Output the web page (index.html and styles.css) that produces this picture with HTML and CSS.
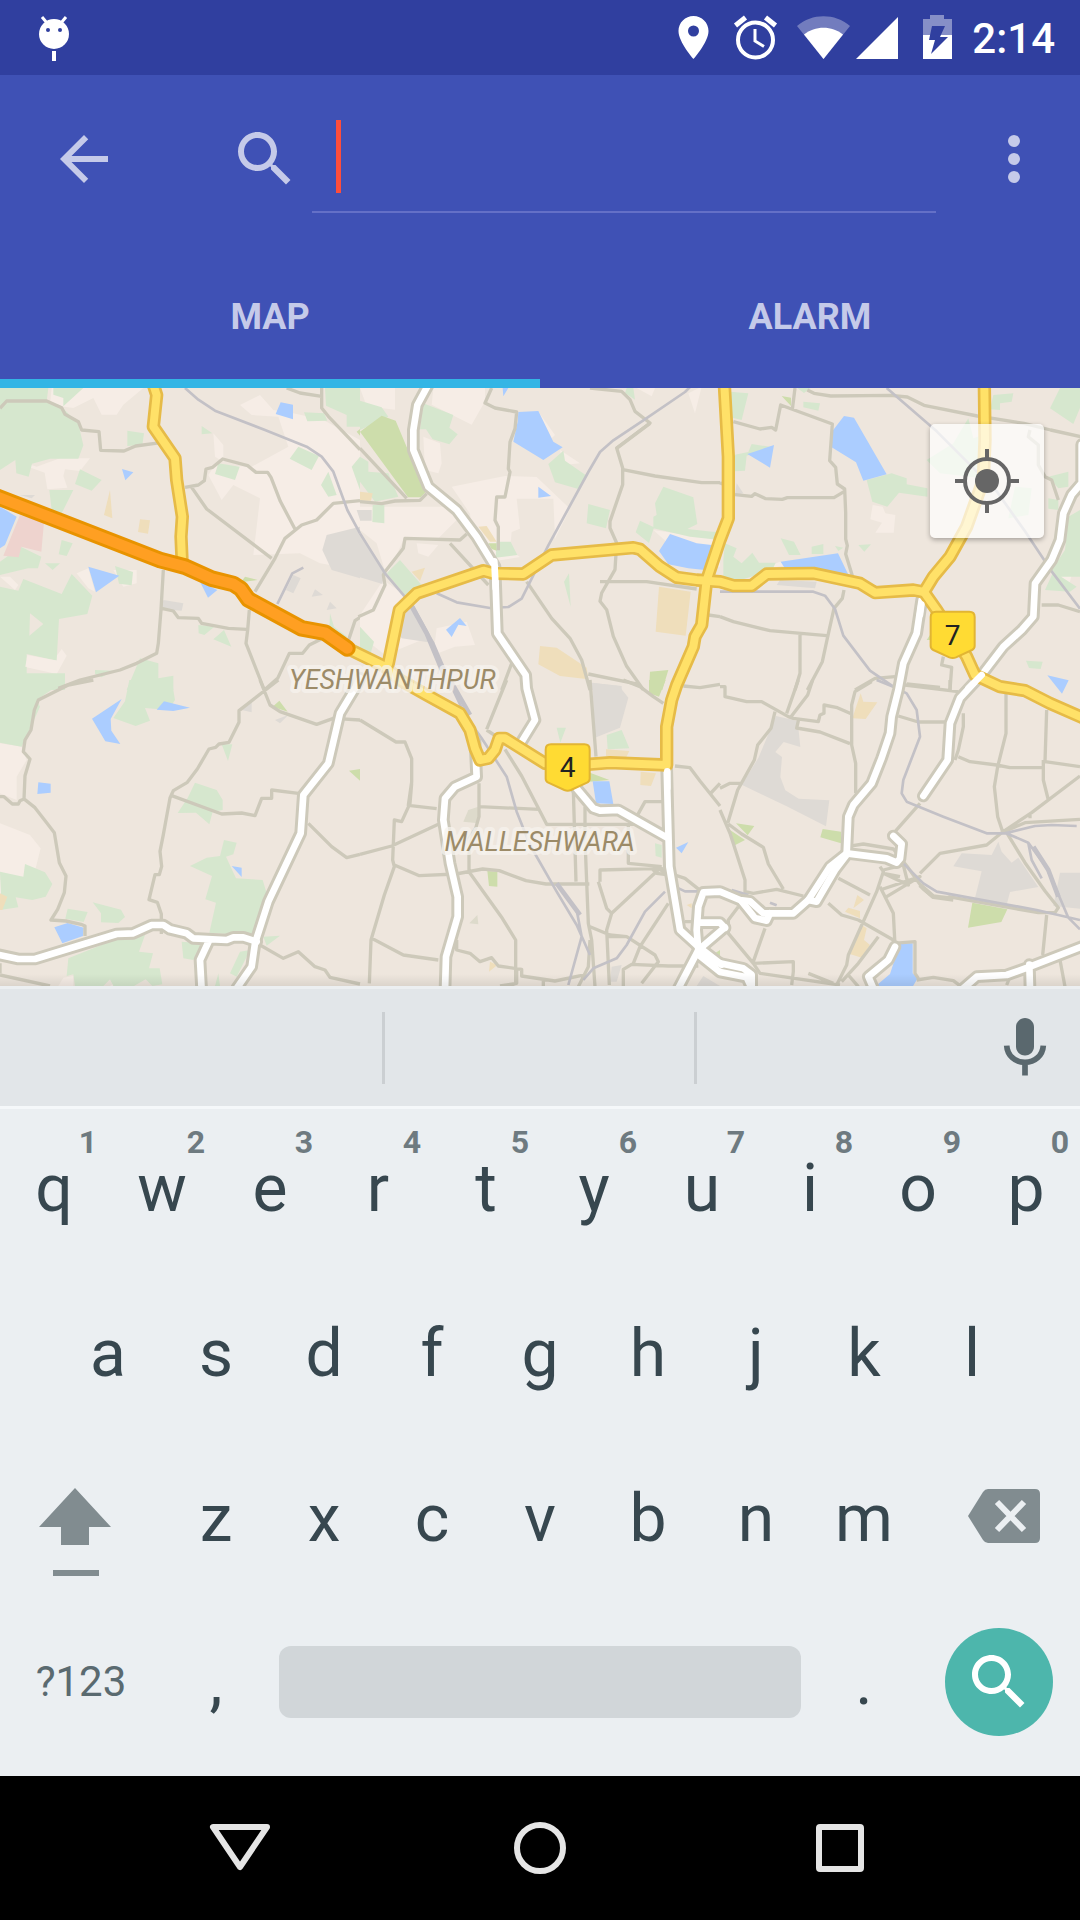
FILE: index.html
```html
<!DOCTYPE html>
<html lang="en">
<head>
<meta charset="utf-8">
<meta name="viewport" content="width=device-width, initial-scale=1">
<title>Map alarm</title>
<link rel="stylesheet" href="styles.css">
</head>
<body>
<svg class="sprite" aria-hidden="true">
  <symbol id="i-search" viewBox="0 0 24 24"><path d="M15.5 14h-.79l-.28-.27C15.41 12.59 16 11.11 16 9.5 16 5.91 13.09 3 9.5 3S3 5.91 3 9.5 5.91 16 9.5 16c1.61 0 3.09-.59 4.23-1.57l.27.28v.79l5 4.99L20.49 19l-4.99-5zm-6 0C7.01 14 5 11.99 5 9.5S7.01 5 9.5 5 14 7.01 14 9.5 11.99 14 9.5 14z"/></symbol>
</svg>

<div class="status">
  <svg class="debug-icon" viewBox="36 0 36 75" width="36" height="75" aria-label="USB debugging">
    <circle cx="54" cy="34" r="15"/>
    <path d="M42 17l5 6M66 17l-5 6" stroke="#fff" stroke-width="3"/>
    <circle cx="48" cy="30" r="2" fill="#303f9f"/><circle cx="60" cy="30" r="2" fill="#303f9f"/>
    <path d="M52 51h4v10h-4z"/>
  </svg>
  <div class="status-icons">
    <svg viewBox="664 0 60 75" width="60" height="75" aria-label="Location"><path fill-rule="evenodd" d="M693.500 16c-8.300 0-15 6.700-15 15 0 11.200 15 28 15 28s15-16.800 15-28c0-8.300-6.700-15-15-15zm0 9.500a5.500 5.500 0 1 1 0 11 5.500 5.500 0 0 1 0-11z"/></svg>
    <svg viewBox="724 0 64 75" width="64" height="75" aria-label="Alarm set"><circle cx="755.500" cy="40" r="17.500" fill="none" stroke="#fff" stroke-width="4"/><path d="M735.500 25.500l10-8M775.500 25.500l-10-8" stroke="#fff" stroke-width="5"/><path d="M755 29v12l9 5.500" fill="none" stroke="#fff" stroke-width="3"/></svg>
    <svg viewBox="788 0 66 75" width="66" height="75" aria-label="Wi-Fi"><path opacity=".32" d="M797 26c15-13 38-13 53 0l-26.500 33z"/><path d="M804 34.500c11-9 28-9 39 0L823.500 59z"/></svg>
    <svg viewBox="854 0 60 75" width="60" height="75" aria-label="Signal"><path d="M898 17v42h-42z"/></svg>
    <svg viewBox="914 0 54 75" width="54" height="75" aria-label="Battery charging"><path opacity=".42" d="M930 15h14v4h8v16h-29V19h7z"/><path d="M923 35h29v24h-29z"/><path fill="#303f9f" d="M932 26h13l-5 11h8l-17 17 4-14h-6z"/></svg>
  </div>
  <time class="clock">2:14</time>
</div>

<header class="appbar">
  <form class="toolbar" onsubmit="return false">
    <button class="icon-btn" type="button" aria-label="Back"><svg viewBox="0 0 24 24"><path d="M20 11H7.830l5.590-5.590L12 4l-8 8 8 8 1.410-1.410L7.830 13H20v-2z"/></svg></button>
    <label class="search-label" for="q" aria-label="Search"><svg viewBox="0 0 24 24"><use href="#i-search"/></svg></label>
    <div class="field"><input id="q" type="text" autocomplete="off"><span class="cursor"></span></div>
    <button class="icon-btn" type="button" aria-label="More options"><svg viewBox="0 0 24 24"><circle cx="12" cy="6" r="2"/><circle cx="12" cy="12" r="2"/><circle cx="12" cy="18" r="2"/></svg></button>
  </form>
  <nav class="tabs">
    <button class="tab active" type="button">MAP</button>
    <button class="tab" type="button">ALARM</button>
  </nav>
</header>

<main class="map">
<svg class="map-art" viewBox="0 0 3240 1794" role="img" aria-label="Street map">
  <defs>
    <g id="white-roads">
      <path d="M1285-10L1252 51 1240 126V186L1285 296 1370 366 1430 446 1485 536 1492 736 1577 861 1580 901 1605 996 1565 1061"/>
      <path d="M1080 870L1065 901 1020 976 985 1126 910 1221 902 1336 805 1541 765 1666 755 1736 710 1801"/>
      <path d="M-10 1699L55 1713H105L350 1638 400 1636 455 1611H490L510 1624 560 1636 580 1651 680 1656 700 1648H730L770 1661M628 1656L600 1716 605 1806"/>
      <path d="M1425 1060L1430 1166 1365 1196 1335 1231 1330 1296 1350 1426 1373 1526V1586L1338 1706 1335 1806"/>
      <path d="M1720 1190L1780 1261 1800 1268 1855 1266 2005 1351M2000 1140L2008 1436 2040 1626 2095 1676 2165 1730"/>
      <path d="M2035 1801L2095 1686 2090 1626 2095 1556 2110 1513 2160 1511 2220 1536 2250 1540 2290 1576H2380L2425 1536 2490 1436 2540 1396 2660 1411 2690 1424 2700 1412 2705 1368 2680 1344"/>
      <path d="M2095 1686L2175 1618M2100 1604L2160 1604 2175 1620M2225 1540L2265 1590 2300 1598 2310 1576M2540 1400L2505 1446 2450 1541 2425 1536M2095 1700L2160 1726 2230 1741 2255 1760 2255 1801M2095 1700L2160 1752 2240 1768 2250 1790"/>
      <path d="M2765 636L2750 736 2710 826 2695 906 2675 986 2670 1036 2645 1110 2615 1186 2560 1251 2545 1286 2540 1396"/>
      <path d="M2770 1224L2843 1116 2850 1006 2880 930 2925 881 2945 861 3010 776 3065 726 3100 686 3105 586 3155 516 3180 456 3190 376 3215 320 3245 285 3245 170"/>
      <path d="M2685 1676L2665 1716 2605 1766 2620 1801M3250 1674L3090 1736 3020 1761 2930 1766 2890 1801M3088 1730L3090 1801"/>
    </g>
    <g id="yellow-roads">
      <path d="M460-10L470 21 460 116 525 211 530 276 547 386 543 446 546 515"/>
      <path d="M1042 781L1155 836 1200 876 1280 921 1380 976 1410 1026 1425 1081 1440 1116 1465 1111 1485 1086 1497 1051 1515 1051 1635 1126 1700 1134 1830 1124 2000 1131V1016L2015 936 2030 891 2080 776 2085 746 2105 711 2120 576 2140 516 2160 456 2185 391V206L2173-10"/>
      <path d="M1165 826L1198 666 1250 616 1450 548 1480 556 1570 558 1655 501 1900 479 1920 484 1980 536 2030 568 2090 576 2160 581 2200 593H2255L2300 558 2440 556 2580 586 2625 614 2740 606 2772 612"/>
      <path d="M2953-10L2955 156 2950 276 2900 416 2850 506 2800 566 2772 612 2810 666 2900 806 2925 861 3000 896 3075 908 3150 946 3250 990"/>
    </g>
    <path id="highway" d="M-20 322L150 388 480 516 555 536 635 572 700 588 722 602 745 634 905 721 975 734 1042 781"/>
  </defs>
  <rect width="3240" height="1794" fill="#eee6dd"/>

  <!-- north-west -->
  <g transform="translate(0 -24)">
    <path class="pale" d="M155 24h275l-60 50-20 30-45 0-25-50-60 30-70-10zM50 240l60 20 70-25h90l-30 38-45-5-5 20 12 35-60 5-8-50-50-18zM720 75l60-30 40 45 60 10 90 20 110 60v360l-60 20-60-10-60-30-140 5 20-170-80-40-35 45-40-75 20-30 110 5 110-60-30-90-80-5zM640 160l30 35v50l-25-15zM80 830l80 12 25-35 15 20-30 55-90-20zM230 580l35-15 20 70-20-10zM340 570l70 0v40l-40 10zM0 590l30 0 25 25-10 15z"/>
    <path class="green" d="M0 24h145l-5 40 40 12 55 55 15 65-15 40-85 0-54 15-10 39-37-10-3-40-46 30zM160 24h90l-60 55 0-25-30-10zM382 152l50 8-5 35-45 3zM240 268l65 32-30 32-50-20zM148 330h72l-35 70-30-10zM605 138l32 22-32 3zM895 200l62 28-22 42-66-34zM655 250l64 10-14 40-60-18zM975 24h105v116h-40l0-35-62-28zM912 97l60 3 10 22-60 2zM985 275l25 70-25 5-22-35zM1055 260l25-30v100zM185 480l33 10-18 38-24-5zM62 500l62 30-10 35-30 0-84 20v-40zM345 558l54 18-4 40-38-5zM135 550l45 0-22 20zM0 620l55 12 15-35 115 45 30-60 62 65-15 55-85 15-7 125-90-20v58h115v50H0zM595 735l48 5-30 25-17-5zM672 750l22 50-54-22zM420 835l55 15 0 45 45-8v43H380zM285 870l55 2-35 20-20-10zM990 700l12 40 40 30-40 10-15-10z"/>
    <path class="base" d="M90 700l40 32-42 35z"/>
    <path class="pale" d="M82 825l92 17-4 30-94-12z"/>
    <path class="sand" d="M330 330l7 85-25-10zM420 418l30 3-6 40-30-5z"/>
    <path class="pink" d="M60 405l72 22-8 88-60-15-8 32-46-5z"/>
    <path class="lime" d="M735 590l38 10-50 7zM1070 155l10-8v20z"/>
    <path class="grey" d="M980 465l100-25v155l-85-25-28-60zM880 585l22 10-22 45-22-10zM945 628l24 17-34 5zM990 665l20 20-30 5zM490 660l60 10-5 22-60-5zM1070 390h10v30zM60 345h45l-10 10z"/>
    <path class="water" d="M842 67l37 7v44l-52-16zM366 267l34 10-24 24zM265 560l93 27-70 50zM600 605l52 25-28 23zM0 380l50 30-35 85-15 10z"/>
    <path class="road" d="M0 85l20-22 120 0 45 20 10 20 40 22 10 25 52 5 5 56 70 2 35-15 75-10M555 322l40-7 18-13 5-35 20-5 30-25 75 20 25 20 35 0 10 15 28 72 45 85M575 322l45 65 195 148M1080 362l-80 8-50 50-45 15-50 40-30 60-60 100M860 24l40 15 65 10M965 24v60l20 25 95 100M490 570l-7 120-8 100-5 30-60 30-50 20-60 15-60 15-65 25M485 685l35 8 15 20 60 2 10 15 80 15 55 3M748 690l-5 60-5 40 55 140 40-35 35-75 40 0 20-25 30-15 60-15M1080 712l-15 10-20 60"/>
    <path class="rail" d="M555 24l40 35 50 33 150 58 125 50 45 30 35 45 22 60 20 55 38 70M832 672l45-92 33-17"/>
  </g>
  <!-- north -->
  <g transform="translate(1080 -24)">
    <path class="pale" d="M0 24h105v65l-85-10zM220 24h155l0 40-40 70-120-60zM190 170l50 20 5 60-10 30-40-10zM275 320l100-20 60-12 95 3 100 95-45 90-5-120h-110l10 90-25 10-5 55 30 20-60 10-80-60-10-80zM0 380h260l30 40-60 60-100 0-50 110-30-100-50-40zM170 490l65 5-30 35-30-10zM600 210l60 40-50 5zM880 450l200 30v80l-100-20zM70 600l85 60 30 120-110 45-75-60v-60zM230 745l90-20 25 70-60 5-65 25zM535 95l50 70-10 10zM985 40l40-20-20 80zM830 24l55 0-10 25z"/>
    <path class="green" d="M0 62l65 20 20 28-85 40zM190 70l90 35-12 38 25 20-25 30-50-15-20-30-18 0zM0 230l25 15 0 30 60 5 30 70-70 15-45-60zM38 375l35 0v55l-36-4zM610 212l5 30 65 45-25 40-70-20-20-55zM685 372l65 18-12 55-58-15zM910 320l90 32 12 80-30 15 75 8 23 0v25l-90-10-110-25v-35l10-5-5-35zM840 422l42 20-15 47-40-32zM410 485h42l20 40-65 8zM120 540l65 75-50 30-55-65zM0 740l42 45-10 35-32-15zM627 580l5 100-20-75zM800 24h20l5 35-30-20z"/>
    <path class="lime" d="M65 107l42 15 90 215-15 15h-38L0 155zM870 875l55-5-18 60h-40zM385 490l25 0 0 22-15-5z"/>
    <path class="sand" d="M355 440l25-2 30 47-20 0zM155 575l40-12-15 40zM540 798l50 5 90 60 5 35-85-10-65-35zM897 620l95 15-15 132-90-12zM0 335l38 5-5 22-33 0z"/>
    <path class="grey" d="M0 460l75 110-8 42-67-20zM150 680l75 110-100-15-30-40 20-40zM0 390h35v32H0zM690 908l95 10v12h-95z"/>
    <path class="water" d="M475 96l60-3 45 92 28 17-58 38-90-55 13-60zM428 24h17l-15 25zM535 320l38 28-38 5zM930 462l80 28 45 5-20 75-50-5-60-12-28-40zM300 714l20 24-25-4-20 37-17-22z"/>
    <path class="road" d="M0 205l140 150M0 365l65 6 40-8 75-2 20-20M395 24l-20 45 30 15 65 12-5 50-15 40-5 80 5 10-15 75-25 0-5 70 10 20 0 70M320 462l-20 18-165-5-5 30-55 70-5 10 5 30-35 75-45 20M270 490l115 125M690 24l95 10 25 25 15 35 45 35-100 75 18 60 0 50-38 110 0 20 20 45-5 80-40 70-5 25 20 25 20 80 40 90 50 70M785 268l100 20 140 20 55 0M720 605h140l150 22M500 605l75 110 55 60 35 65 25 90M685 882l155 32M1045 705l35 5M970 918l50 5 60-10M455 850l-30 80"/>
    <path class="rail" d="M0 460l75 120 85 100 60 110 60 140M230 640l60 27 100 17 55-3 40-25 30-60 50-100 120-220 35-60 40-35 90-60 125-85 30-30 30-45"/>
    <path class="rail thick" d="M150 670l50 90 50 120 25 50"/>
    <path class="road" d="M770 205l100-75"/>
  </g>
  <!-- north-east -->
  <g transform="translate(2160 -24)">
    <path class="pale" d="M458 375l30 5 8 20 30 5-5 53-55 0 20-30-35-10zM1000 600l30-60 30 25-10 40-40 10zM140 560l40-15 20 10-50 10z"/>
    <path class="green" d="M30 35l55 5-20 80-35-8zM95 192l65 10-80 25-5 45-30 2v-50l40-8zM440 300l75-20 45 15 0 18 62 12v25l-85-12-35 42-45-15zM250 65l50 5-5 22-45-10zM232 24h40l-20 15zM820 45l60-5-5 25-35 5 0 20-30-2zM1020 24h60v60l-20 48-70-47zM15 490l35 15-10 25 25 20 32-32 20 30 50 0-10 22-95 30H10v-60zM182 475l40 10 20 40-35 0zM275 500l35-8 0 30-35 0zM415 495l38-2-20 22zM345 498l25 5-15 10zM985 290l60-15v45l-30 5zM985 355l30 5 0 30-30-4zM1045 410l35-20v200l-60 0-25-20 40-60zM975 630l25-55 70 45-20 15zM745 115l15 60 30-10v130l-130-15-40-40 80-50zM885 320l50 5-10 80-60 10zM918 842l50 3-6 22-35-3z"/>
    <path class="lime" d="M185 48l28 5 0 25zM620 780l20-30v30z"/>
    <path class="grey" d="M180 600l110 5-5 20-115-10zM50 310l20 30-25 5z"/>
    <path class="water" d="M372 108l30 5 98 170-70 19-22-55-73-45 3-50zM82 222l80-27-12 68zM182 545l172-25 30 62-160-15-30-3zM982 886l64 15-20 40z"/>
    <path class="road" d="M225 24l-8 65M40 125l80 22 35-5 12 8 15-75 155 57-8 110 18 20 5 50 22 15 3 70 0 80 5 20-5 25 20 65M372 335l-30 18-140 0-15 5-50-2-32-15-10 8-50-5M0 308l10 5M262 30l20 10 50 8 180-2 50 5 50 25 160 32 140 22 80 20 90 20M372 630l-5 25-25 30-20 90-15 70-45 85M0 710l40 15 110 27 170 15M240 760l0 120-15 50M965 675l50 0 65 20M670 830l-5 25 30 7-5 68M405 930l60-35 60-5M930 150l-5 20 30 25 0 60 20 35 20 10 20 60M560 912l100 10"/>
    <path class="rail" d="M500 24l150 130 180 180 85 120 80 120 85 112M0 635h280l35 12 30 40 25 80 80 105 70 48"/>
  </g>

  <!-- south-west -->
  <g transform="translate(0 876)">
    <path class="pale" d="M0 190l65 10 15 40-30 50v70l-50-20zM0 430l90 35 32 40-15 60-40 30-67-15zM0 600h35l-15 45-20 0zM175 918l15-25 30-5v30zM330 918l25-20 40 20z"/>
    <path class="green" d="M0 0h190v5l-80 55 10 20-25 55-30 65-65-12zM388 0h127l10 60-20 30-70-6 15 38-43 16-67-24 35-50zM0 575l70 15 5-38 60 25 22 35-20 38-40 10-50-8 8 30-50 7zM203 686l60 10-12 30-55-10zM278 667l85 22 12 22-20 18-52-2 0-27zM585 308l65 22 18 30v30l-30 5-10 38-40-35-55 1 30-45zM672 480l38 8-10 35-22 7 30 65 80 5 12 40-25 90-12 38-135-10 20-90-32-10 20-70-66-30 50-25 40-5zM665 193l32 0-13 50zM205 835l150-60 80-10-18 50 42 5-12 45 32 0 8 48-30 5-20-20-35 20H340l-10-20-20 20h-85l-5-35-20 5zM545 785l60 5-25 50-30-5zM720 815l30-5-40 80-20-10zM790 770l50-3-40 30zM655 880l5 38h-15z"/>
    <path class="lime" d="M838 62l25 33-45-15zM1047 272l33-5v35z"/>
    <path class="sand" d="M0 640l22 10-15 40-7 0z"/>
    <path class="grey" d="M725 90l30-25 0 32zM825 120l40-15-25 25z"/>
    <path class="water" d="M365 57l-33 60 2 35 27 40-45-8-40-68zM492 64l78 19-50 10-50-4zM115 307l37 4v27l-40 4zM163 742l40-13 48 14-2 25-62 22zM695 558l30 5 0 28z"/>
    <path class="road" d="M280 0l-75 15-90 45-12 30-10 60-18 30-5 35 20 22-15 50-3 70-12 5-5 10-18 0-25-22H0M70 355l35 28 35 45 23 30 15 90 20 40-5 50-20 50-20 32 45 3 45 10 12 5v30M780 0l30 75 30 20 110 38 50-18 80 5M835 0l-118 92 0 35-30 60-30 5-10 10-20 5-35 60-30 40-42 25-10 22-20 110-10 50 5 45-7 25-13 0-18 75 25 8 12 35 0 60M515 347l150 55 60-3 40 8 20-52 30 0 0-25 80 10M925 430l70 70 45 33 40-10M780 795l70 40 45-20 50 45 30 10 15 22 90 20M0 885l150 33M0 850v30"/>
  </g>
  <!-- south -->
  <g transform="translate(1080 876)">
    <path class="green" d="M590 143h28l-17 45zM740 165l45-15 23 55-65 3zM885 490l20 5v38l-18-5z"/>
    <path class="lime" d="M867 0h50l-20 50-30-10zM690 278l58 22-60 5zM382 573l30 2v45l-25-2zM1065 820l15-10v30z"/>
    <path class="sand" d="M738 208l70 5-10 20-60-5zM842 275l46 5-15 38-32-3zM390 845l22 10-25 20zM980 675l15-5v15z"/>
    <path class="grey" d="M697 8l80 10 28 35-25 90-75 30zM755 860l30-5-15 50-20 0zM1030 888l50 30h-70z"/>
    <path fill="#dddacb" d="M325 390l30-10v50l-45-5zM352 705l3 28-27-3z"/>
    <path class="water" d="M698 304l50 0 12 68-52-2zM985 486l-20 34-17-17z"/>
    <path class="road" d="M0 120l108 66 27 0 20 50 0 70-10 70 85 10M155 310l-5 60-25 55-22-5-5 120 5 20-30 85-40 135-5 130M0 523l95-25 140-65M103 555l75 32 110-5 80-15 50 5 80 30 60 10h130M357 310v100l-10 35-20 30 0 100 100 140 40 65 0 130-50 20M357 380l180 8M380 150l90 60M440 0l-60 148M435 208l50 80 75 145h270M640 330l8 275M675 380l0 100 10 250 10 50 10 140M690 0l18 230M805 430l0 120 100 10M790 0l50 20 40 30 30 20M830 410l25-45h55M720 605v-35l185-5 10 15M715 605l25 80 15 15-15 50 8 165M755 700l150-140M690 740l60 25 50 5 85 55 10 20-50 65M35 775l95 50 105 15M290 780v30l40 10 30 25 35-12 20 25 70 10 0 20 100 15 95-20M470 865v45l-50 8M550 895v30M740 770l55 0M790 918l0-50 25-15 110 5 90 0M820 850l20-50 85-130M900 570l75 25 50 40M945 258l45 5 30 40 60 75M1080 310l-30 32M870 560l20 20 40 5M975 725h40M690 780l-5 80-30 60"/>
    <path class="rail" d="M275 20l40 85 50 70 75 115 30 105 40 100 80 140 60 100 40 90M650 690l15 80-40 145M670 900l30-35 70-30 30-40 55-100 60-60M945 620l30 14 60 0"/>
    <path class="rail thick" d="M270 0l60 105M590 610l70 95"/>
  </g>
  <!-- south-east -->
  <g transform="translate(2160 876)">
    <path class="lime" d="M48 430l55 8-20 28zM30 450l45 30-35 18zM308 447l55 8v35l-62-18zM757 668l105 20-18 38-100 17z"/>
    <path class="sand" d="M422 40l8 25 42 2-35 50-40-2zM412 645l20 15-32 25zM385 683l35 10v22l-45-20zM425 735l15 10-8 35 18 15-25 38-38-12z"/>
    <path class="grey" d="M168 108l65 15 8 78-50-15-25 30 20 15-5 60 15 40 40 25 92 5-10 78-118-60-135-65 50-80zM725 520l90 5 20-40 10 30 30 33 20-15 60 88-85 15-10 38-95-20 20-80-85-15zM1020 578h60v108l-80-8z"/>
    <path class="water" d="M540 790h38l0 90 15 15-15 25H465l45-38z"/>
    <path class="road" d="M0 20l15 0v30l65 15h45l80 45 15 5 75 10 5-20 12-5 0-25 40 8 45 20M235 0l-35 100M278 0l-15 45-50 65M235 122l-5 22 70 12 90 35M165 95l-12 50-40 50-10 45-50 90-30 100M0 325l30-15 35 0M0 390l30 70 45 140v35l25 5 70-12 80 20M25 432l40 30 65 40 15 50 45 75M455 5l-50 30-10 40 0 120 12 55 0 90M600 370l-75 85M555 15l160 20 0 0M690 0v30M730 100l0 40-15 70-10 30M715 230l35 15 80 10 40 8h95M858 40l0 120-25 100-10 60 10 90 15 45M980 90l-5 155 105 15M970 240l0 60 15 60M535 108l60 18 80 0M845 458l90-60 145-110M930 400v15M845 458l70-30 165-10M600 580l60-60 140-25 45-37M380 500l50-8 90 15 40 50 50 70 30 25 60 0M860 458l55 90 60 85 40 50-10 15-50 0-270-48M355 595l95 50M480 630l120-40-100 60M480 560l10 15-20 60-85 190-5 30-30 60M490 570l60-15 15 60-75-35 50 10M480 620l40 80 5 95M325 670l40 35 50 15 105 60 0 10 65-5v95l10 15M590 900l50-8 60 10 20 15M475 770l-60 80-50 55M55 680l-30 40 0 40 75 90 120-5 0 30-5 40M100 845l35-100M100 850l20 30 240 35M265 880l75 30M980 705l-12 120M1020 840l15 80M385 885l30 35M870 890l-10 25"/>
    <path class="rail" d="M470 0l50 20 40 20 30 50 10 80-50 130-5 40 15 25 110 45 130 50 55 0 90-22 50-3 75 3M550 550l60 60 40 25 300 55 130 30M855 458l70 30 55 75 35 80 30 70 35 35M925 490l10 50 30 55M35 630l50 15M150 668l20 8"/>
    <path class="rail thick" d="M940 500l45 70 30 80"/>
    <path class="road thick" d="M600 615l40 35 60 8"/>
  </g>

  <!-- main roads: casing, then fill -->
  <g class="lines">
    <use href="#white-roads" class="case-white"/>
    <use href="#white-roads" class="fill-white"/>
    <use href="#yellow-roads" class="case-yellow"/>
    <use href="#yellow-roads" class="fill-yellow"/>
    <path class="fill-white" d="M1483 520L1487 600M2945 861L2905 901M2764 650L2760 680M2002 1150V1200"/>
    <use href="#highway" class="case-orange"/>
    <use href="#highway" class="fill-orange"/>
  </g>

  <g class="shield"><path d="M2808 671H2908Q2924 671 2924 687V774Q2924 782 2916 786L2868 808Q2858 812 2848 808L2800 786Q2792 782 2792 774V687Q2792 671 2808 671Z"/><text x="2858" y="770">7</text></g>
  <g class="shield"><path d="M1653 1069H1753Q1769 1069 1769 1085V1172Q1769 1180 1761 1184L1713 1206Q1703 1210 1693 1206L1645 1184Q1637 1180 1637 1172V1085Q1637 1069 1653 1069Z"/><text x="1703" y="1168">4</text></g>
  <text class="place" x="1177" y="902">YESHWANTHPUR</text>
  <text class="place" x="1619" y="1390">MALLESHWARA</text>
</svg>
<button class="locate" type="button" aria-label="My location"><svg viewBox="-36 -36 72 72"><circle r="22" fill="none" stroke="#666" stroke-width="4"/><circle r="12"/><path d="M-32 0h10M22 0h10M0-32v10M0 22v10" stroke="#666" stroke-width="4"/></svg></button>
</main>

<section class="keyboard" aria-label="Keyboard">
  <div class="suggestions">
    <div class="slots"><span></span><span></span><span></span></div>
    <button class="mic" type="button" aria-label="Voice input"><svg viewBox="0 0 24 24"><path d="M12 14.500c1.900 0 3-1.500 3-3V5c0-1.660-1.340-3-3-3S9 3.340 9 5v6.500c0 1.500 1.100 3 3 3z"/><path d="M5.900 11.200c.2 3.300 2.800 5.600 6.100 5.600s5.900-2.300 6.100-5.600M12 17v4.200" fill="none" stroke="#5a686e" stroke-width="1.900"/></svg></button>
  </div>
  <div class="row">
    <button class="key" type="button">q<sup>1</sup></button><button class="key" type="button">w<sup>2</sup></button><button class="key" type="button">e<sup>3</sup></button><button class="key" type="button">r<sup>4</sup></button><button class="key" type="button">t<sup>5</sup></button><button class="key" type="button">y<sup>6</sup></button><button class="key" type="button">u<sup>7</sup></button><button class="key" type="button">i<sup>8</sup></button><button class="key" type="button">o<sup>9</sup></button><button class="key" type="button">p<sup>0</sup></button>
  </div>
  <div class="row inset">
    <button class="key" type="button">a</button><button class="key" type="button">s</button><button class="key" type="button">d</button><button class="key" type="button">f</button><button class="key" type="button">g</button><button class="key" type="button">h</button><button class="key" type="button">j</button><button class="key" type="button">k</button><button class="key" type="button">l</button>
  </div>
  <div class="row">
    <button class="key broad shift" type="button" aria-label="Shift"><svg viewBox="0 -5 150 165" width="150" height="165"><path d="M75 47l36 39H89v18H61V86H39zM53 129h46v6H53z"/></svg></button>
    <button class="key" type="button">z</button><button class="key" type="button">x</button><button class="key" type="button">c</button><button class="key" type="button">v</button><button class="key" type="button">b</button><button class="key" type="button">n</button><button class="key" type="button">m</button>
    <button class="key broad erase" type="button" aria-label="Delete"><svg viewBox="0 -5 152 165" width="152" height="165"><path d="M60 48h47q5 0 5 5v44q0 5-5 5H60q-3 0-5-3L40 75l15-24q2-3 5-3z"/><path d="M69 61l27 28M96 61L69 89" stroke="#ebeff2" stroke-width="6"/></svg></button>
  </div>
  <div class="row last">
    <button class="key broad symbols" type="button">?123</button>
    <button class="key" type="button">,</button>
    <button class="key space" type="button" aria-label="Space"><span></span></button>
    <button class="key" type="button">.</button>
    <button class="key broad go" type="button" aria-label="Search"><span><svg viewBox="0 0 24 24"><use href="#i-search"/></svg></span></button>
  </div>
</section>

<nav class="navbar">
  <button type="button" aria-label="Back"><svg viewBox="-36 -36 72 72"><path d="M-27-21h54L0 19z" stroke-linejoin="round"/></svg></button>
  <button type="button" aria-label="Home"><svg viewBox="-36 -36 72 72"><circle r="23"/></svg></button>
  <button type="button" aria-label="Recent apps"><svg viewBox="-36 -36 72 72"><rect x="-21" y="-21" width="42" height="42" rx="1"/></svg></button>
</nav>
</body>
</html>
```
FILE: styles.css
```css
* { box-sizing: border-box; }
body {
  margin: 0;
  min-height: 100vh;
  display: flex;
  flex-direction: column;
  background: #000;
  font-family: Roboto, "Liberation Sans", sans-serif;
}
button {
  margin: 0;
  padding: 0;
  border: 0;
  background: none;
  color: inherit;
  font: inherit;
}
svg { display: block; }
.sprite { position: absolute; width: 0; height: 0; }

/* status bar */
.status {
  display: flex;
  align-items: center;
  height: 75px;
  padding: 0 25px 0 36px;
  background: #303f9f;
  color: #fff;
  fill: #fff;
}
.status-icons { display: flex; margin-left: auto; }
.clock { padding: 3px 0 0 4px; font-size: 42px; line-height: 48px; font-weight: 500; }

/* app bar */
.appbar { background: #3f51b5; color: #c5cae9; fill: #c5cae9; }
.toolbar {
  display: flex;
  align-items: center;
  height: 168px;
  padding: 0 30px 0 48px;
}
.icon-btn svg, .search-label svg { width: 72px; height: 72px; }
.search-label { margin: 0 11px 0 109px; }
.field { position: relative; flex: 1; margin-right: 42px; }
.field input {
  display: block;
  width: 100%;
  height: 108px;
  padding: 0 24px;
  border: 0;
  border-bottom: 2px solid #6470c7;
  outline: 0;
  background: none;
  color: #fff;
  font: 54px/72px Roboto, sans-serif;
}
.cursor {
  position: absolute;
  left: 24px;
  top: 15px;
  width: 5px;
  height: 73px;
  background: #fe4d3b;
}
.tabs { display: flex; height: 145px; }
.tab {
  flex: 1;
  padding-top: 12px;
  border-bottom: 9px solid transparent;
  font-size: 36px;
  font-weight: 700;
}
.tab.active { border-color: #33b5e5; }

/* map */
.map { position: relative; background: #eee6dd; }
.map::after {
  content: "";
  position: absolute;
  inset: auto 0 0;
  height: 12px;
  background: linear-gradient(transparent, rgba(0, 0, 0, .08));
}
.map-art { width: 100%; height: auto; }
.base { fill: #eee6dd; }
.pale { fill: #f6ede6; }
.green { fill: #d6e7ce; }
.lime { fill: #cdddab; }
.grey { fill: #dedad5; }
.sand { fill: #efdebb; }
.pink { fill: #eed3ce; }
.water { fill: #abcdff; }
.road, .rail { fill: none; stroke-linejoin: round; stroke-width: 10; }
.road { stroke: #cdc9ba; }
.rail { stroke: #c3c1c6; stroke-width: 8; }
.thick { stroke-width: 14; }
.lines { fill: none; stroke-linejoin: round; stroke-linecap: round; }
.case-white { stroke: #cdc9ba; stroke-width: 38; }
.case-yellow { stroke: #e6bb47; stroke-width: 40; }
.case-orange { stroke: #e89300; stroke-width: 50; }
.fill-white { stroke: #fff; stroke-width: 20; }
.fill-yellow { stroke: #ffe168; stroke-width: 24; }
.fill-orange { stroke: #ff9f22; stroke-width: 32; }
.shield path { fill: #ffdb33; stroke: #e2b533; stroke-width: 6; }
.shield text { fill: #222; font-size: 84px; text-anchor: middle; }
.place {
  fill: #9c8b68;
  stroke: rgba(246, 243, 238, .75);
  stroke-width: 24px;
  stroke-linejoin: round;
  paint-order: stroke;
  font-size: 81px;
  font-style: italic;
  text-anchor: middle;
}
.locate {
  position: absolute;
  top: 36px;
  right: 36px;
  display: grid;
  place-items: center;
  width: 114px;
  height: 114px;
  border-radius: 5px;
  background: rgba(255, 255, 255, .7);
  box-shadow: 0 2px 5px rgba(0, 0, 0, .3);
  fill: #666;
}
.locate svg { width: 72px; height: 72px; }

/* keyboard */
.keyboard {
  flex: 1;
  padding-bottom: 13px;
  background: #ebeff2;
  color: #37474f;
}
.suggestions {
  display: flex;
  align-items: center;
  height: 123px;
  margin-bottom: -3px;
  border-top: 3px solid #eceff1;
  border-bottom: 3px solid #f5f8fa;
  background: #e2e6e9;
}
.slots { flex: 1; display: flex; height: 72px; padding-left: 72px; }
.slots span { flex: 1; }
.slots span + span { border-left: 3px solid #cbcfd2; }
.mic { margin: 0 19px 0 -18px; fill: #5a686e; }
.mic svg { width: 72px; height: 72px; }
.row { display: flex; height: 165px; }
.row.inset { padding: 0 5%; }
.row.last { height: 162px; }
.key {
  position: relative;
  flex: 1 1 0;
  min-width: 0;
  font-size: 66px;
  line-height: 78px;
}
.key sup {
  position: absolute;
  top: 16px;
  left: 54px;
  right: 0;
  padding-left: 14px;
  text-align: center;
  font-size: 32px;
  line-height: 40px;
  font-weight: 700;
  color: #6e7a80;
}
.key.broad { flex-grow: 1.5; }
.shift svg, .erase svg { fill: #818c90; }
.erase svg { margin-left: auto; }
.symbols { font-size: 42px; color: #5a6a70; }
.space { flex-grow: 5; }
.space span { display: block; height: 72px; margin: 0 9px; border-radius: 12px; background: #d1d6d9; }
.go span {
  display: grid;
  place-items: center;
  width: 108px;
  height: 108px;
  margin: 0 auto;
  border-radius: 50%;
  background: #4db6ac;
}
.go svg { width: 72px; height: 72px; fill: #fff; }

/* system navigation */
.navbar {
  display: grid;
  grid-template-columns: repeat(3, 1fr);
  height: 144px;
  padding: 0 90px;
  background: #000;
}
.navbar button { display: grid; place-items: center; }
.navbar svg { width: 72px; height: 72px; fill: none; stroke: #e5e5e5; stroke-width: 6; }
```
